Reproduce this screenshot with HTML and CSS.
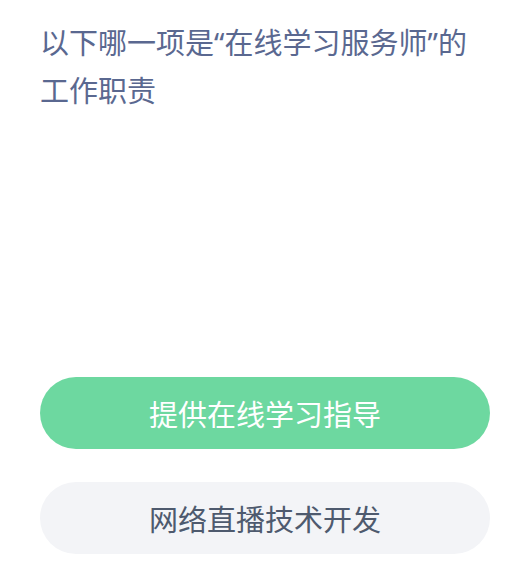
FILE: index.html
```html
<!DOCTYPE html>
<html lang="zh-CN">
<head>
<meta charset="utf-8">
<link rel="stylesheet" href="styles.css">
</head>
<body>
<main class="page">
  <h1 class="question">以下哪一项是<span class="quote">“</span>在线学习服务师<span class="quote">”</span>的工作职责</h1>
  <div class="options">
    <div class="option option-correct">提供在线学习指导</div>
    <div class="option option-plain">网络直播技术开发</div>
  </div>
</main>
</body>
</html>
```

FILE: styles.css
```css
html, body {
  margin: 0;
  padding: 0;
  background: #ffffff;
}
body {
  font-family: "Noto Sans CJK SC", "Noto Sans", sans-serif;
}
.page {
  width: 450px;
  padding: 17px 0 0 40px;
}
.question {
  margin: 0;
  font-size: 29px;
  font-weight: 400;
  line-height: 48px;
  color: #5a6890;
  letter-spacing: 0;
}
.quote {
  font-family: "Noto Sans", "Noto Sans CJK SC", sans-serif;
  line-height: 1;
}
.options {
  display: flex;
  flex-direction: column;
  gap: 33px;
  margin-top: 264px;
}
.option {
  height: 72px;
  border-radius: 36px;
  display: flex;
  align-items: center;
  justify-content: center;
  font-size: 29px;
  line-height: 1;
}
.option-correct {
  background: #6dd8a0;
  color: #ffffff;
}
.option-plain {
  background: #f3f4f7;
  color: #4e5a6e;
}
```
